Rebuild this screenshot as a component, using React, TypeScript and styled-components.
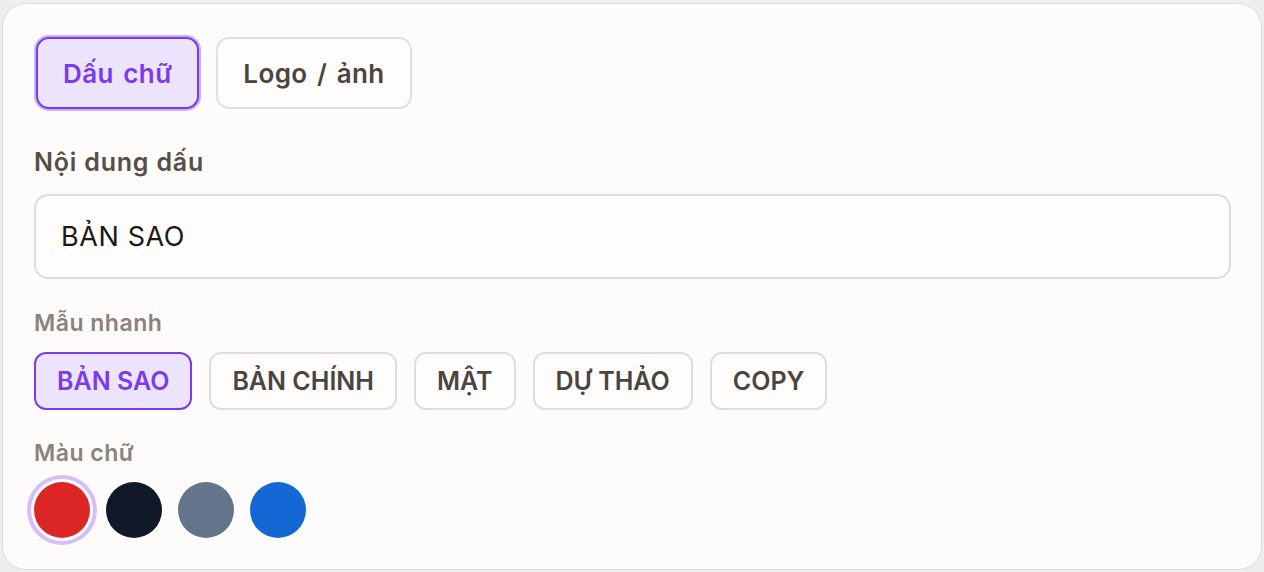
import React, { useState } from "react";
import styled, { createGlobalStyle } from "styled-components";

const Global = createGlobalStyle`
  html, body { margin: 0; padding: 0; background: #efeeec; }
  body { font-family: Inter, "Noto Sans", sans-serif; }
  * { box-sizing: border-box; }
`;

const Page = styled.div`
  padding: 3px 2px 2px 2px;
`;

const Card = styled.div`
  height: 567px;
  background: #fdfcfb;
  border: 1px solid #dddbd7;
  border-radius: 24px;
  padding: 33px 30px 0 31px;
  display: flex;
  flex-direction: column;
`;

const Tabs = styled.div`
  display: flex;
  gap: 17px;
  padding-left: 2px;
`;

const Tab = styled.button<{ $active?: boolean }>`
  height: 72px;
  padding: 0 25px;
  border-radius: 13px;
  font-family: inherit;
  font-size: 26px;
  letter-spacing: 0.4px;
  word-spacing: 2.5px;
  font-weight: 600;
  cursor: pointer;
  border: 2px solid ${(p) => (p.$active ? "#7c3aed" : "#e2e0dd")};
  background: ${(p) => (p.$active ? "#ebe4fc" : "#fefdfc")};
  color: ${(p) => (p.$active ? "#7c3aed" : "#4b4440")};
  box-shadow: ${(p) => (p.$active ? "0 0 0 2px #c9b0f6" : "none")};
`;

const Label = styled.div<{ $muted?: boolean; $top: number }>`
  margin-top: ${(p) => p.$top}px;
  font-size: ${(p) => (p.$muted ? 23 : 25)}px;
  letter-spacing: ${(p) => (p.$muted ? 0.5 : 0.8)}px;
  line-height: ${(p) => (p.$muted ? 30 : 32)}px;
  font-weight: 600;
  color: ${(p) => (p.$muted ? "#8a827c" : "#564e49")};
`;

const Input = styled.input`
  margin-top: 16px;
  height: 85px;
  width: 100%;
  border: 2px solid #dfddda;
  border-radius: 14px;
  background: #fefdfc;
  padding: 0 25px;
  font-family: inherit;
  font-size: 27px;
  letter-spacing: 0.6px;
  color: #1d1815;
  outline: none;
`;

const Chips = styled.div`
  margin-top: 14px;
  display: flex;
  gap: 17px;
`;

const Chip = styled.button<{ $active?: boolean }>`
  height: 58px;
  padding: 0 21px;
  border-radius: 12px;
  font-family: inherit;
  font-size: 25px;
  letter-spacing: 0;
  font-weight: 600;
  cursor: pointer;
  border: 2px solid ${(p) => (p.$active ? "#7c3aed" : "#e0dedb")};
  background: ${(p) => (p.$active ? "#ebe4fc" : "#fefdfc")};
  color: ${(p) => (p.$active ? "#7c3aed" : "#4b4440")};
`;

const Swatches = styled.div`
  margin-top: 14px;
  display: flex;
  gap: 16px;
`;

const Swatch = styled.button<{ $color: string; $active?: boolean }>`
  width: 56px;
  height: 56px;
  border-radius: 50%;
  border: none;
  padding: 0;
  cursor: pointer;
  background: ${(p) => p.$color};
  box-shadow: ${(p) =>
    p.$active ? "0 0 0 3px #fefdfc, 0 0 0 7px #d6bdf8" : "none"};
`;

const presets = ["BẢN SAO", "BẢN CHÍNH", "MẬT", "DỰ THẢO", "COPY"];
const colors = ["#dc2626", "#111827", "#64748b", "#1368d6"];

export default function App() {
  const [tab, setTab] = useState(0);
  const [text, setText] = useState("BẢN SAO");
  const [color, setColor] = useState(0);
  return (
    <Page>
      <Global />
      <Card>
        <Tabs>
          <Tab $active={tab === 0} onClick={() => setTab(0)}>
            Dấu chữ
          </Tab>
          <Tab $active={tab === 1} onClick={() => setTab(1)}>
            Logo / ảnh
          </Tab>
        </Tabs>
        <Label $top={37}>Nội dung dấu</Label>
        <Input value={text} onChange={(e) => setText(e.target.value)} />
        <Label $muted $top={29}>
          Mẫu nhanh
        </Label>
        <Chips>
          {presets.map((p) => (
            <Chip key={p} $active={p === text} onClick={() => setText(p)}>
              {p}
            </Chip>
          ))}
        </Chips>
        <Label $muted $top={28}>
          Màu chữ
        </Label>
        <Swatches>
          {colors.map((c, i) => (
            <Swatch
              key={c}
              $color={c}
              $active={i === color}
              onClick={() => setColor(i)}
            />
          ))}
        </Swatches>
      </Card>
    </Page>
  );
}
